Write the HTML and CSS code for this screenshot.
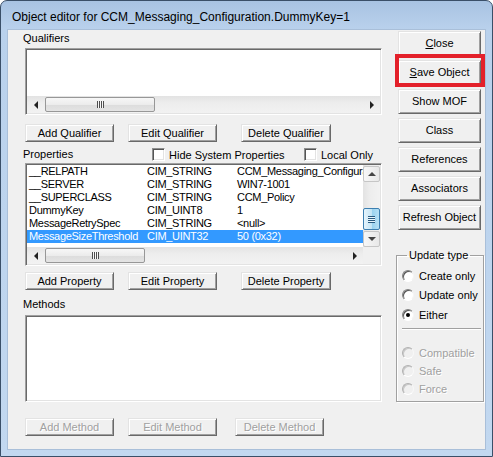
FILE: index.html
```html
<!DOCTYPE html>
<html>
<head>
<meta charset="utf-8">
<link rel="stylesheet" href="styles.css">
</head>
<body>
<div class="window">
  <div class="titlebar">Object editor for CCM_Messaging_Configuration.DummyKey=1</div>
  <div class="client">
    <div class="left">
      <div class="label lbl-qual">Qualifiers</div>
      <div class="listbox qual-list">
        <div class="list-body"></div>
        <div class="hscroll">
          <span class="arrow"><span class="tri-l"></span></span>
          <span class="hthumb qual-thumb"><span class="hgrip"></span></span>
          <span class="spacer"></span>
          <span class="arrow"><span class="tri-r"></span></span>
        </div>
      </div>
      <div class="btnrow qual-btns">
        <button class="btn b1">Add Qualifier</button>
        <button class="btn b2">Edit Qualifier</button>
        <button class="btn b3">Delete Qualifier</button>
      </div>
      <div class="props-head">
        <span class="label props-label">Properties</span>
        <span class="check check1"><span class="box"></span>Hide System Properties</span>
        <span class="check"><span class="box"></span>Local Only</span>
      </div>
      <div class="listbox prop-list">
        <div class="prop-main">
          <div class="rows">
            <div class="row"><span class="c1">__RELPATH</span><span class="c2">CIM_STRING</span><span class="c3">CCM_Messaging_Configuration.DummyKey=1</span></div>
            <div class="row"><span class="c1">__SERVER</span><span class="c2">CIM_STRING</span><span class="c3">WIN7-1001</span></div>
            <div class="row"><span class="c1">__SUPERCLASS</span><span class="c2">CIM_STRING</span><span class="c3">CCM_Policy</span></div>
            <div class="row"><span class="c1">DummyKey</span><span class="c2">CIM_UINT8</span><span class="c3">1</span></div>
            <div class="row"><span class="c1">MessageRetrySpec</span><span class="c2">CIM_STRING</span><span class="c3">&lt;null&gt;</span></div>
            <div class="row selected"><span class="c1">MessageSizeThreshold</span><span class="c2">CIM_UINT32</span><span class="c3">50 (0x32)</span></div>
          </div>
          <div class="vscroll">
            <span class="varrow"><span class="tri-u"></span></span>
            <span class="vspace1"></span>
            <span class="vthumb"><span class="vgrip"></span></span>
            <span class="varrow"><span class="tri-d"></span></span>
          </div>
        </div>
        <div class="hrow">
          <div class="hscroll">
            <span class="arrow"><span class="tri-l"></span></span>
            <span class="hthumb prop-thumb"><span class="hgrip"></span></span>
            <span class="spacer"></span>
            <span class="arrow"><span class="tri-r"></span></span>
          </div>
          <div class="corner"></div>
        </div>
      </div>
      <div class="btnrow prop-btns">
        <button class="btn b1">Add Property</button>
        <button class="btn b2">Edit Property</button>
        <button class="btn b3">Delete Property</button>
      </div>
      <div class="label lbl-meth">Methods</div>
      <div class="listbox meth-list"></div>
      <div class="btnrow meth-btns">
        <button class="btn b1 disabled">Add Method</button>
        <button class="btn b2 disabled">Edit Method</button>
        <button class="btn b3m disabled">Delete Method</button>
      </div>
    </div>
    <div class="right">
      <button class="btn rbtn"><u>C</u>lose</button>
      <button class="btn rbtn"><u>S</u>ave Object</button>
      <button class="btn rbtn">Show MOF</button>
      <button class="btn rbtn">Class</button>
      <button class="btn rbtn">References</button>
      <button class="btn rbtn">Associators</button>
      <button class="btn rbtn">Refresh Object</button>
      <fieldset class="group">
        <legend>Update type</legend>
        <div class="radio-row first"><span class="radio"></span>Create only</div>
        <div class="radio-row"><span class="radio"></span>Update only</div>
        <div class="radio-row"><span class="radio checked"></span>Either</div>
        <div class="sep"></div>
        <div class="radio-row dis first-dis"><span class="radio"></span>Compatible</div>
        <div class="radio-row dis"><span class="radio"></span>Safe</div>
        <div class="radio-row dis"><span class="radio"></span>Force</div>
      </fieldset>
    </div>
  </div>
  <div class="highlight"></div>
</div>
</body>
</html>
```

FILE: styles.css
```css
html, body {
  margin: 0;
  padding: 0;
  background: #fff;
}
body {
  font-family: "Liberation Sans", Arial, sans-serif;
  font-size: 11px;
  color: #000;
}
.window {
  position: relative;
  width: 493px;
  height: 457px;
  box-sizing: border-box;
  border: 1px solid #3a4f68;
  border-radius: 7px 7px 0 0;
  background: linear-gradient(180deg, #a8c3e2 0px, #b9d1ec 28px, #c2d8f0 100%);
  padding: 0 7px 7px 7px;
  display: flex;
  flex-direction: column;
}
.titlebar {
  height: 29px;
  box-sizing: border-box;
  padding: 9px 0 0 4px;
  font-size: 12px;
  line-height: 15px;
  white-space: nowrap;
}
.client {
  flex: 1;
  background: #f0f0f0;
  display: flex;
  padding-left: 15px;
  box-shadow: 0 0 0 1px #a9bfd9;
}
.left {
  width: 360px;
  display: flex;
  flex-direction: column;
}
.label {
  line-height: 13px;
  height: 13px;
  white-space: nowrap;
}
.lbl-qual { margin-top: 2px; }
.listbox {
  box-sizing: border-box;
  margin-left: 2px;
  width: 357px;
  border: 1px solid;
  border-color: #a0a0a0 #fff #fff #a0a0a0;
  box-shadow: inset 1px 1px #696969, inset -1px -1px #e3e3e3;
  background: #fff;
  padding: 1px;
  display: flex;
  flex-direction: column;
}
.qual-list {
  margin-top: 3px;
  height: 67px;
}
.list-body { flex: 1; }
.hscroll {
  height: 17px;
  flex: none;
  display: flex;
  align-items: center;
  background: linear-gradient(180deg, #e3e3e3 0, #ededed 40%, #f2f2f2 100%);
}
.hrow .hscroll { flex: 1; }
.arrow {
  width: 17px;
  height: 17px;
  display: flex;
  align-items: center;
  justify-content: center;
  flex: none;
}
.spacer { flex: 1; }
.tri-l {
  width: 0; height: 0;
  border-top: 4px solid transparent;
  border-bottom: 4px solid transparent;
  border-right: 4px solid #222;
}
.tri-r {
  width: 0; height: 0;
  border-top: 4px solid transparent;
  border-bottom: 4px solid transparent;
  border-left: 4px solid #222;
}
.tri-u {
  width: 0; height: 0;
  border-left: 4px solid transparent;
  border-right: 4px solid transparent;
  border-bottom: 4px solid #444;
}
.tri-d {
  width: 0; height: 0;
  border-left: 4px solid transparent;
  border-right: 4px solid transparent;
  border-top: 4px solid #444;
}
.hthumb {
  margin-left: 1px;
  height: 15px;
  box-sizing: border-box;
  border: 1px solid #979797;
  border-radius: 2px;
  background: linear-gradient(180deg, #f7f7f7 0, #ececec 50%, #dcdcdc 51%, #e4e4e4 100%);
  display: flex;
  align-items: center;
  justify-content: center;
  flex: none;
}
.qual-thumb { width: 110px; }
.prop-thumb { width: 100px; }
.hgrip {
  width: 7px;
  height: 7px;
  background: repeating-linear-gradient(90deg, #4f4f4f 0 1px, #f8f8f8 1px 2px);
}
.btnrow {
  display: flex;
  height: 18px;
}
.btn {
  box-sizing: border-box;
  font-family: inherit;
  font-size: 11px;
  color: #000;
  padding: 0;
  margin: 0;
  background: #f0f0f0;
  border: 1px solid;
  border-color: #e3e3e3 #696969 #696969 #e3e3e3;
  box-shadow: inset 1px 1px #fff, inset -1px -1px #a0a0a0;
  white-space: nowrap;
  line-height: 13px;
}
.btnrow .btn { height: 18px; width: 89px; }
.btn.b1 { margin-left: 2px; }
.btn.b2 { margin-left: 14px; }
.btn.b3 { margin-left: 24px; width: 90px; }
.btn.b3m { margin-left: 18px; }
.btn.disabled {
  color: #a0a0a0;
  text-shadow: 1px 1px #fff;
}
.qual-btns { margin-top: 9px; }
.props-head {
  margin-top: 6px;
  height: 13px;
  display: flex;
  align-items: center;
}
.props-label { width: 129px; }
.check {
  display: flex;
  align-items: center;
  white-space: nowrap;
}
.check1 { width: 152px; }
.box {
  width: 13px;
  height: 13px;
  box-sizing: border-box;
  border: 1px solid;
  border-color: #8e8f8f #fff #fff #8e8f8f;
  box-shadow: inset 1px 1px #555, inset -1px -1px #e3e3e3;
  background: #fff;
  margin-right: 4px;
}
.prop-list {
  margin-top: 2px;
  height: 103px;
}
.prop-main {
  flex: 1;
  display: flex;
  min-height: 0;
}
.rows {
  flex: 1;
  overflow: hidden;
}
.row {
  display: flex;
  height: 13px;
  line-height: 13px;
  white-space: nowrap;
  padding-left: 2px;
  letter-spacing: -0.3px;
}
.row.selected {
  background: #3399ff;
  color: #fff;
}
.c1 { width: 118px; flex: none; }
.c2 { width: 90px; flex: none; }
.c3 { flex: none; }
.vscroll {
  width: 17px;
  flex: none;
  display: flex;
  flex-direction: column;
  background: linear-gradient(90deg, #e3e3e3 0, #ededed 40%, #f2f2f2 100%);
}
.varrow {
  height: 16px;
  box-sizing: border-box;
  margin: 1px 0 0 0;
  border: 1px solid #c6c6c6;
  border-radius: 2px;
  background: linear-gradient(90deg, #f7f7f7, #e8e8e8);
  display: flex;
  align-items: center;
  justify-content: center;
  flex: none;
}
.vspace1 { flex: 1; }
.vthumb {
  height: 22px;
  box-sizing: border-box;
  border: 1px solid #3c7fb1;
  border-radius: 2px;
  background: linear-gradient(90deg, #e5f4fc 0, #c4e5f6 50%, #98d1ef 51%, #b6e0f5 100%);
  display: flex;
  align-items: center;
  justify-content: center;
  flex: none;
}
.vgrip {
  width: 7px;
  height: 7px;
  background: repeating-linear-gradient(180deg, #2a5a80 0 1px, #e8f6fd 1px 2px);
}
.hrow {
  display: flex;
  height: 17px;
  flex: none;
}
.corner {
  width: 17px;
  background: #f0f0f0;
}
.prop-btns { margin-top: 6px; }
.lbl-meth { margin-top: 8px; }
.meth-list {
  margin-top: 4px;
  height: 87px;
}
.meth-btns { margin-top: 16px; }
.right {
  margin-left: 12px;
  width: 90px;
  display: flex;
  flex-direction: column;
}
.rbtn {
  width: 83px;
  height: 25px;
  margin: 4px 0 0 3px;
}
.rbtn:first-child { margin-top: 1px; }
.group {
  margin: 19px 0 0 1px;
  padding: 0 0 5px 5px;
  width: 88px;
  height: 153px;
  box-sizing: border-box;
  border: 1px solid #a0a0a0;
  box-shadow: inset 1px 1px #fff, 1px 1px #fff;
  min-width: 0;
}
.group legend {
  padding: 0 2px;
  margin-left: 5px;
  line-height: 13px;
}
.radio-row {
  height: 19.5px;
  display: flex;
  align-items: center;
  white-space: nowrap;
}
.radio-row.first { margin-top: 4px; }
.radio-row.dis {
  height: 18px;
  color: #a0a0a0;
  text-shadow: 1px 1px #fff;
}
.radio-row.first-dis { margin-top: 14px; }
.radio {
  width: 12px;
  height: 12px;
  box-sizing: border-box;
  border-radius: 50%;
  border: 1px solid;
  border-color: #808080 #f4f4f4 #fff #808080;
  box-shadow: inset 1px 1px #555;
  background: #fff;
  margin-right: 5px;
  display: flex;
  align-items: center;
  justify-content: center;
  flex: none;
}
.dis .radio {
  background: #f0f0f0;
  border-color: #b0b0b0 #f8f8f8 #fff #b0b0b0;
  box-shadow: inset 1px 1px #c8c8c8;
}
.radio.checked::after {
  content: "";
  width: 4px;
  height: 4px;
  border-radius: 50%;
  background: #000;
}
.sep {
  margin: 3px 2px 0 0;
  height: 1px;
  background: #a0a0a0;
  border-bottom: 1px solid #fff;
}
.highlight {
  position: absolute;
  left: 394px;
  top: 53px;
  width: 90px;
  height: 33px;
  box-sizing: border-box;
  border: 4px solid #e3202a;
  pointer-events: none;
}
```
